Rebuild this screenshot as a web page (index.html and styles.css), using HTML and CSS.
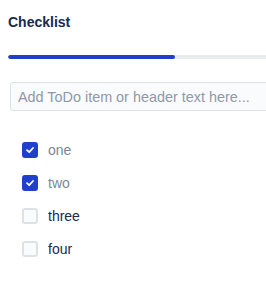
FILE: index.html
```html
<!DOCTYPE html>
<html lang="en">
  <head>
    <meta charset="UTF-8" />
    <title>Checklist</title>
    <link rel="stylesheet" href="styles.css">
  </head>
  <body>
    <div class="checklist">
      <h2>Checklist</h2>
      <div class="progress">
        <div class="progress-fill" style="width: 57.6%"></div>
      </div>
      <input class="add-input" type="text" placeholder="Add ToDo item or header text here..." />
      <ul class="items">
        <li class="item done">
          <span class="box checked">
            <svg width="10" height="10" viewBox="0 0 10 10"><path d="M2 5.2 L4.2 7.2 L8 3" fill="none" stroke="#fff" stroke-width="1.8" stroke-linecap="round" stroke-linejoin="round"/></svg>
          </span>
          <span class="label">one</span>
        </li>
        <li class="item done">
          <span class="box checked">
            <svg width="10" height="10" viewBox="0 0 10 10"><path d="M2 5.2 L4.2 7.2 L8 3" fill="none" stroke="#fff" stroke-width="1.8" stroke-linecap="round" stroke-linejoin="round"/></svg>
          </span>
          <span class="label">two</span>
        </li>
        <li class="item">
          <span class="box"></span>
          <span class="label">three</span>
        </li>
        <li class="item">
          <span class="box"></span>
          <span class="label">four</span>
        </li>
      </ul>
    </div>
  </body>
</html>
```

FILE: styles.css
```css
body {
  margin: 0;
  padding: 0;
  font-family: "Liberation Sans", Arial, sans-serif;
  background-color: #ffffff;
  color: #172b4d;
  overflow: hidden;
}
.checklist {
  width: 290px;
  padding: 14px 0 0 8px;
}
h2 {
  margin: 0;
  font-size: 14px;
  font-weight: bold;
  line-height: 16px;
  color: #172b4d;
}
.progress {
  margin-top: 25px;
  height: 4px;
  border-radius: 2px;
  background-color: #ebecf0;
  overflow: hidden;
}
.progress-fill {
  height: 100%;
  background-color: #1f3fcc;
  border-radius: 2px;
}
.add-input {
  display: block;
  box-sizing: border-box;
  margin: 23px 0 0 2px;
  width: 290px;
  height: 29px;
  padding: 0 7px;
  font-family: inherit;
  font-size: 14.4px;
  color: #172b4d;
  background-color: #fafbfc;
  border: 1px solid #dfe1e6;
  border-radius: 3px;
  outline: none;
}
.add-input::placeholder {
  color: #8f98a8;
}
.items {
  list-style: none;
  margin: 31px 0 0 0;
  padding: 0 0 0 14px;
  display: flex;
  flex-direction: column;
  gap: 17px;
}
.item {
  display: flex;
  align-items: center;
  gap: 10px;
  height: 16px;
  font-size: 14px;
}
.box {
  box-sizing: border-box;
  width: 16px;
  height: 16px;
  border-radius: 3px;
  border: 2px solid #dfe1e6;
  background-color: #fafbfc;
  display: flex;
  align-items: center;
  justify-content: center;
}
.box.checked {
  border-color: #1f3fcc;
  background-color: #1f3fcc;
}
.item.done .label {
  color: #7a869a;
}
```
